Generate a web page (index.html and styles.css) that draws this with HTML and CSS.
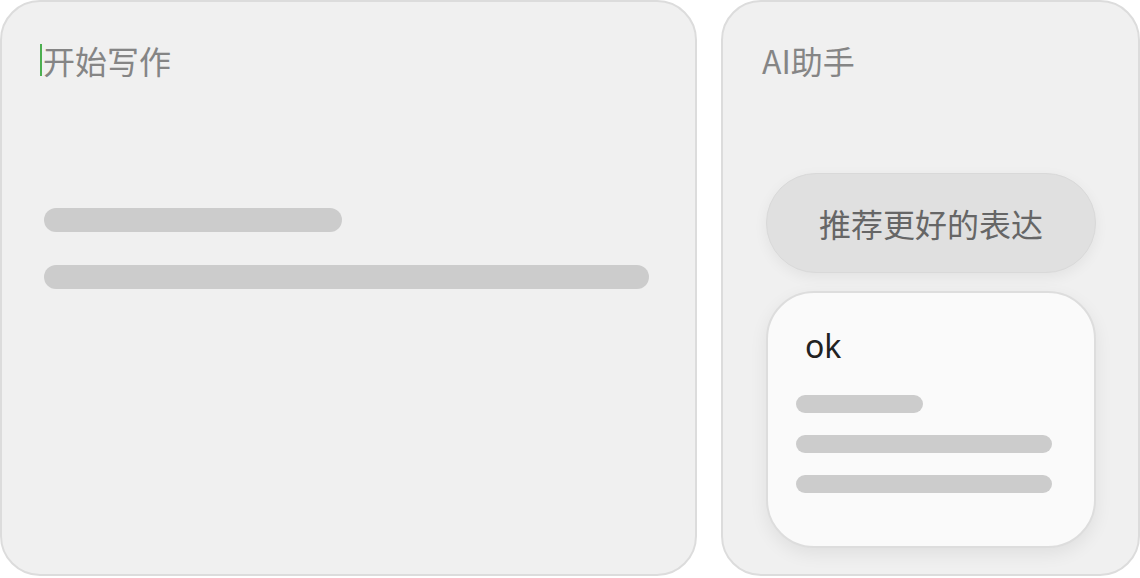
FILE: index.html
```html
<!DOCTYPE html>
<html lang="zh-CN">
<head>
    <meta charset="UTF-8">
    <meta name="viewport" content="width=device-width, initial-scale=1.0">
    <title>写作助手</title>
    <link rel="stylesheet" href="styles.css">
</head>
<body>
    <div class="editor">
        <div class="editor-title"><span class="caret"></span>开始写作</div>
        <div class="line line-short"></div>
        <div class="line line-long"></div>
    </div>
    <div class="assistant">
        <div class="assistant-title">AI助手</div>
        <button class="suggest-btn">推荐更好的表达</button>
        <div class="reply-card">
            <div class="reply-text">ok</div>
            <div class="reply-line reply-short"></div>
            <div class="reply-line"></div>
            <div class="reply-line"></div>
        </div>
    </div>
</body>
</html>
```

FILE: styles.css
```css
:root {
    --panel-bg: #f0f0f0;
    --panel-border: #dcdcdc;
    --bar-color: #cccccc;
    --title-color: #858585;
}

body {
    font-family: "Noto Sans", "Noto Sans CJK SC", sans-serif;
    margin: 0;
    padding: 0;
    background-color: #fff;
    display: flex;
    gap: 24px;
    height: 578px;
}

.editor,
.assistant {
    box-sizing: border-box;
    height: 576px;
    background-color: var(--panel-bg);
    border: 2px solid var(--panel-border);
    border-radius: 40px;
}

.editor {
    width: 697px;
    padding: 35px 46px 0 42px;
}

.editor-title,
.assistant-title {
    font-family: "Noto Sans CJK SC", sans-serif;
    font-size: 32px;
    line-height: 46px;
    color: var(--title-color);
}

.editor-title {
    display: flex;
    align-items: center;
    margin-left: -4px;
}

.caret {
    display: inline-block;
    width: 2px;
    height: 32px;
    background-color: #4caf50;
    margin-right: 1px;
}

.line {
    height: 24px;
    border-radius: 12px;
    background-color: var(--bar-color);
}

.line-short {
    width: 298px;
    margin-top: 125px;
}

.line-long {
    width: 605px;
    margin-top: 33px;
}

.assistant {
    flex: 1;
    padding: 35px 42px 0 43px;
    display: flex;
    flex-direction: column;
}

.assistant-title {
    margin-left: -4px;
}

.suggest-btn {
    margin-top: 90px;
    height: 100px;
    width: 330px;
    border-radius: 50px;
    border: 1px solid #d9d9d9;
    background-color: #e0e0e0;
    box-shadow: 0 4px 14px rgba(0, 0, 0, 0.06);
    font-family: "Noto Sans CJK SC", sans-serif;
    font-size: 32px;
    color: #666;
    cursor: pointer;
}

.reply-card {
    box-sizing: border-box;
    margin-top: 18px;
    width: 330px;
    height: 257px;
    padding: 33px 42px 0 28px;
    background-color: #fafafa;
    border: 2px solid #dddddd;
    border-radius: 48px;
    box-shadow: 0 6px 18px rgba(0, 0, 0, 0.07);
}

.reply-text {
    font-size: 32px;
    line-height: 40px;
    color: #222;
    margin-left: 9px;
}

.reply-line {
    height: 18px;
    border-radius: 9px;
    background-color: var(--bar-color);
    margin-top: 22px;
}

.reply-short {
    width: 127px;
    margin-top: 29px;
}
```
